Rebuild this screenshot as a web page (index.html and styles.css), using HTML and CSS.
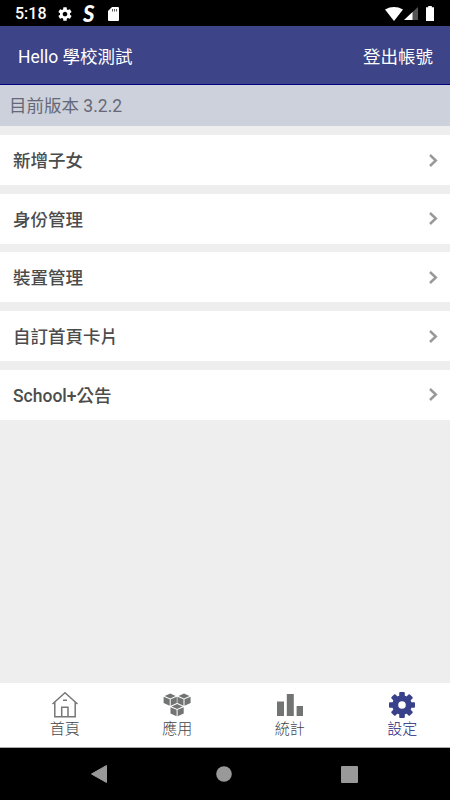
FILE: index.html
```html
<!DOCTYPE html>
<html lang="zh-Hant">
<head>
    <meta charset="UTF-8">
    <meta name="viewport" content="width=device-width, initial-scale=1">
    <title>設定</title>
    <link rel="stylesheet" href="styles.css">
</head>
<body>
    <div class="statusbar">
        <div class="status-left">
            <span class="clock">5:18</span>
            <svg class="status-gear" width="16" height="16" viewBox="0 0 24 24"><path fill="#fff" d="M19.43 12.98c.04-.32.07-.64.07-.98s-.03-.66-.07-.98l2.11-1.65c.19-.15.24-.42.12-.64l-2-3.46c-.12-.22-.39-.3-.61-.22l-2.49 1c-.52-.4-1.08-.73-1.69-.98l-.38-2.65C14.46 2.18 14.25 2 14 2h-4c-.25 0-.46.18-.49.42l-.38 2.65c-.61.25-1.17.59-1.69.98l-2.49-1c-.23-.09-.49 0-.61.22l-2 3.46c-.13.22-.07.49.12.64l2.11 1.65c-.04.32-.07.65-.07.98s.03.66.07.98l-2.11 1.65c-.19.15-.24.42-.12.64l2 3.46c.12.22.39.3.61.22l2.49-1c.52.4 1.08.73 1.69.98l.38 2.65c.03.24.24.42.49.42h4c.25 0 .46-.18.49-.42l.38-2.65c.61-.25 1.17-.59 1.69-.98l2.49 1c.23.09.49 0 .61-.22l2-3.46c.12-.22.07-.49-.12-.64l-2.11-1.65zM12 15.5c-1.93 0-3.5-1.57-3.5-3.5s1.57-3.5 3.5-3.5 3.5 1.57 3.5 3.5-1.57 3.5-3.5 3.5z"/></svg>
            <span class="status-s">S</span>
            <svg width="11" height="14" viewBox="0 0 11 14"><path fill="#fff" d="M4 0h6q1 0 1 1v12q0 1-1 1H1q-1 0-1-1V4z"/><path stroke="#000" stroke-opacity=".65" d="M4.500 2v2.500M6.500 2v2.500M8.500 2v2.500"/></svg>
        </div>
        <div class="status-right">
            <svg width="18" height="14" viewBox="0 0 18 14"><path fill="#fff" d="M0 2.500Q9-2.300 18 2.500L9 14z"/></svg>
            <svg class="signal" width="14" height="14" viewBox="0 0 14 14"><path fill="#555" d="M14 0v13H8V5.500z"/><path fill="#fff" d="M8.500 5v8H0z"/></svg>
            <svg width="8" height="15" viewBox="0 0 8 15"><path fill="#fff" d="M2.200 0h3.600v1.200H8V15H0V1.200h2.200z"/></svg>
        </div>
    </div>

    <div class="header">
        <span>Hello 學校測試</span>
        <span>登出帳號</span>
    </div>
    <div class="version">目前版本 3.2.2</div>

    <div class="menu">
        <div class="item"><span>新增子女</span><svg class="arrow" viewBox="0 0 9 13"><path d="M1 1l5.800 5.500L1 12"/></svg></div>
        <div class="item"><span>身份管理</span><svg class="arrow" viewBox="0 0 9 13"><path d="M1 1l5.800 5.500L1 12"/></svg></div>
        <div class="item"><span>裝置管理</span><svg class="arrow" viewBox="0 0 9 13"><path d="M1 1l5.800 5.500L1 12"/></svg></div>
        <div class="item"><span>自訂首頁卡片</span><svg class="arrow" viewBox="0 0 9 13"><path d="M1 1l5.800 5.500L1 12"/></svg></div>
        <div class="item"><span>School+公告</span><svg class="arrow" viewBox="0 0 9 13"><path d="M1 1l5.800 5.500L1 12"/></svg></div>
    </div>

    <div class="tabs">
        <div class="tab">
            <svg width="28" height="28" viewBox="0 0 28 28"><path fill="none" stroke="#777" stroke-width="1.500" d="M1.500 13L14 1.800 26.500 13M3.800 11.200v14.500h20.400V11.200M10.700 25.700v-9.400h6.300v9.400M12 9.300h4"/></svg>
            <span>首頁</span>
        </div>
        <div class="tab">
            <svg width="28" height="28" viewBox="0 0 28 28">
                <defs>
                    <g id="cube">
                        <path d="M6.600 0l5.500 2.400-5.500 2.500-5.500-2.500z"/>
                        <path d="M0 3.200l6.100 2.600v6.400L0 9.400zM13.200 3.200L7.100 5.800v6.400l6.100-2.800z"/>
                    </g>
                </defs>
                <g fill="#727473">
                    <use href="#cube" x=".6" y="2.500"/>
                    <use href="#cube" x="14.400" y="2.500"/>
                    <use href="#cube" x="7.500" y="13"/>
                </g>
            </svg>
            <span>應用</span>
        </div>
        <div class="tab">
            <svg width="28" height="28" viewBox="0 0 28 28"><path fill="#727473" d="M1 10.500h7V25H1zM10.800 3h7v22h-7zM20.600 15H27v10h-6.400z"/></svg>
            <span>統計</span>
        </div>
        <div class="tab active">
            <svg width="28" height="28" viewBox="0 0 28 28">
                <g fill="#39418a">
                    <rect x="11.200" y="1" width="5.600" height="26" rx="1"/>
                    <rect x="11.200" y="1" width="5.600" height="26" rx="1" transform="rotate(45 14 14)"/>
                    <rect x="11.200" y="1" width="5.600" height="26" rx="1" transform="rotate(90 14 14)"/>
                    <rect x="11.200" y="1" width="5.600" height="26" rx="1" transform="rotate(135 14 14)"/>
                    <circle cx="14" cy="14" r="9.800"/>
                </g>
                <circle cx="14" cy="14" r="3.800" fill="#fff"/>
            </svg>
            <span>設定</span>
        </div>
    </div>

    <div class="navbar">
        <svg width="16" height="18" viewBox="0 0 16 18"><path fill="#999" stroke="#999" stroke-linejoin="round" d="M15.500.5v17L.5 9z"/></svg>
        <svg width="16" height="16" viewBox="0 0 16 16"><circle cx="8" cy="8" r="7.800" fill="#999"/></svg>
        <svg width="17" height="17" viewBox="0 0 17 17"><rect width="17" height="17" rx="1" fill="#999"/></svg>
    </div>
</body>
</html>
```
FILE: styles.css
```css
body {
    margin: 0;
    height: 800px;
    display: flex;
    flex-direction: column;
    overflow: hidden;
    background-color: #eee;
    font-family: Roboto, "Noto Sans CJK TC", sans-serif;
}
svg {
    display: block;
    flex: none;
}
.statusbar {
    height: 26px;
    flex: none;
    display: flex;
    justify-content: space-between;
    background-color: #000;
    color: #fff;
}
.status-left, .status-right {
    display: flex;
    align-items: center;
    padding: 1px 16px 0 15px;
}
.clock {
    width: 30px;
    font-size: 16px;
    font-weight: 500;
    line-height: 26px;
    padding-top: 1px;
}
.status-gear {
    margin-left: 12px;
}
.status-s {
    width: 13px;
    margin: 0 12px 0 10px;
    font-family: Lato, sans-serif;
    font-size: 22px;
    font-style: italic;
    font-weight: 900;
    line-height: 24px;
}
.signal {
    margin: 0 8px 0 1px;
}
.header {
    height: 58px;
    flex: none;
    display: flex;
    align-items: center;
    justify-content: space-between;
    padding: 0 17px 0 18px;
    border-bottom: 1px solid #000080;
    background-color: #3d4487;
    color: #fff;
    font-size: 17.500px;
}
.version {
    height: 41px;
    flex: none;
    line-height: 42px;
    padding-left: 9px;
    background-color: #cdd1db;
    color: #666877;
    font-size: 17.500px;
}
.menu {
    flex: 1;
    display: flex;
    flex-direction: column;
    gap: 8.700px;
    padding-top: 9px;
}
.item {
    height: 50px;
    flex: none;
    display: flex;
    align-items: center;
    justify-content: space-between;
    padding: 0 12px 0 13px;
    background-color: #fff;
    color: #4c4c4c;
    font-size: 17.500px;
    font-weight: 500;
}
.item span {
    padding-bottom: 1px;
}
.arrow {
    width: 9px;
    height: 13px;
    fill: none;
    stroke: #999;
    stroke-width: 2.500;
}
.tabs {
    height: 64px;
    flex: none;
    display: flex;
    border-bottom: 1px solid #aaa;
    background-color: #fff;
}
.tab {
    flex: 1;
    display: flex;
    flex-direction: column;
    align-items: center;
    padding: 8px 0 0 17px;
    color: #444;
    font-size: 15px;
    font-weight: 300;
    line-height: 20px;
}
.active {
    color: #1c2480;
}
.navbar {
    height: 52px;
    flex: none;
    display: flex;
    align-items: center;
    justify-content: space-between;
    padding: 0 92px 0 91px;
    background-color: #000;
}
```
